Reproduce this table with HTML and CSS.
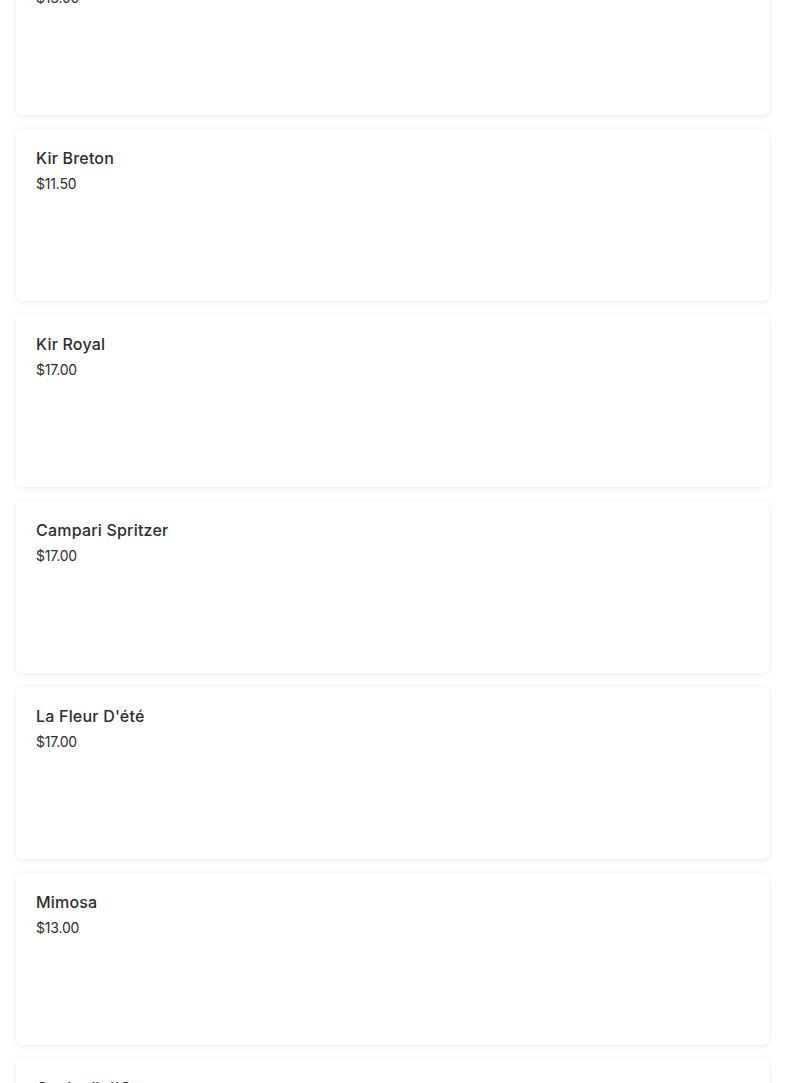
FILE: index.html
```html
<!DOCTYPE html>
<html lang="en">
<head>
<meta charset="utf-8">
<title>Menu</title>
<link rel="stylesheet" href="styles.css">
</head>
<body>
<main class="menu">
  <article class="item"><h3 class="item-name">Kir Normand</h3><p class="item-price">$13.00</p></article>
  <article class="item"><h3 class="item-name">Kir Breton</h3><p class="item-price">$11.50</p></article>
  <article class="item"><h3 class="item-name">Kir Royal</h3><p class="item-price">$17.00</p></article>
  <article class="item"><h3 class="item-name">Campari Spritzer</h3><p class="item-price">$17.00</p></article>
  <article class="item"><h3 class="item-name">La Fleur D'été</h3><p class="item-price">$17.00</p></article>
  <article class="item"><h3 class="item-name">Mimosa</h3><p class="item-price">$13.00</p></article>
  <article class="item"><h3 class="item-name">Cocktail d'Orange</h3><p class="item-price">$13.00</p></article>
</main>
</body>
</html>
```
FILE: styles.css
```css
html, body {
  margin: 0;
  padding: 0;
  background: #ffffff;
  overflow: hidden;
}
body {
  font-family: Inter, "Liberation Sans", sans-serif;
  color: #2b2b2b;
}
.menu {
  display: flex;
  flex-direction: column;
  gap: 14px;
  padding: 0 16px;
  margin-top: -57px;
}
.item {
  box-sizing: border-box;
  height: 172px;
  background: #fff;
  border-radius: 6px;
  box-shadow: 0 1px 6px rgba(0, 0, 0, 0.09);
  padding: 17px 20px;
}
.item-name {
  margin: 0;
  font-size: 16px;
  line-height: 24px;
  font-weight: 500;
  letter-spacing: 0.2px;
  color: #2d2d2d;
}
.item-price {
  margin: 4px 0 0;
  font-size: 14px;
  line-height: 20px;
  font-weight: 400;
  letter-spacing: -0.2px;
  color: #2d2d2d;
}
```
